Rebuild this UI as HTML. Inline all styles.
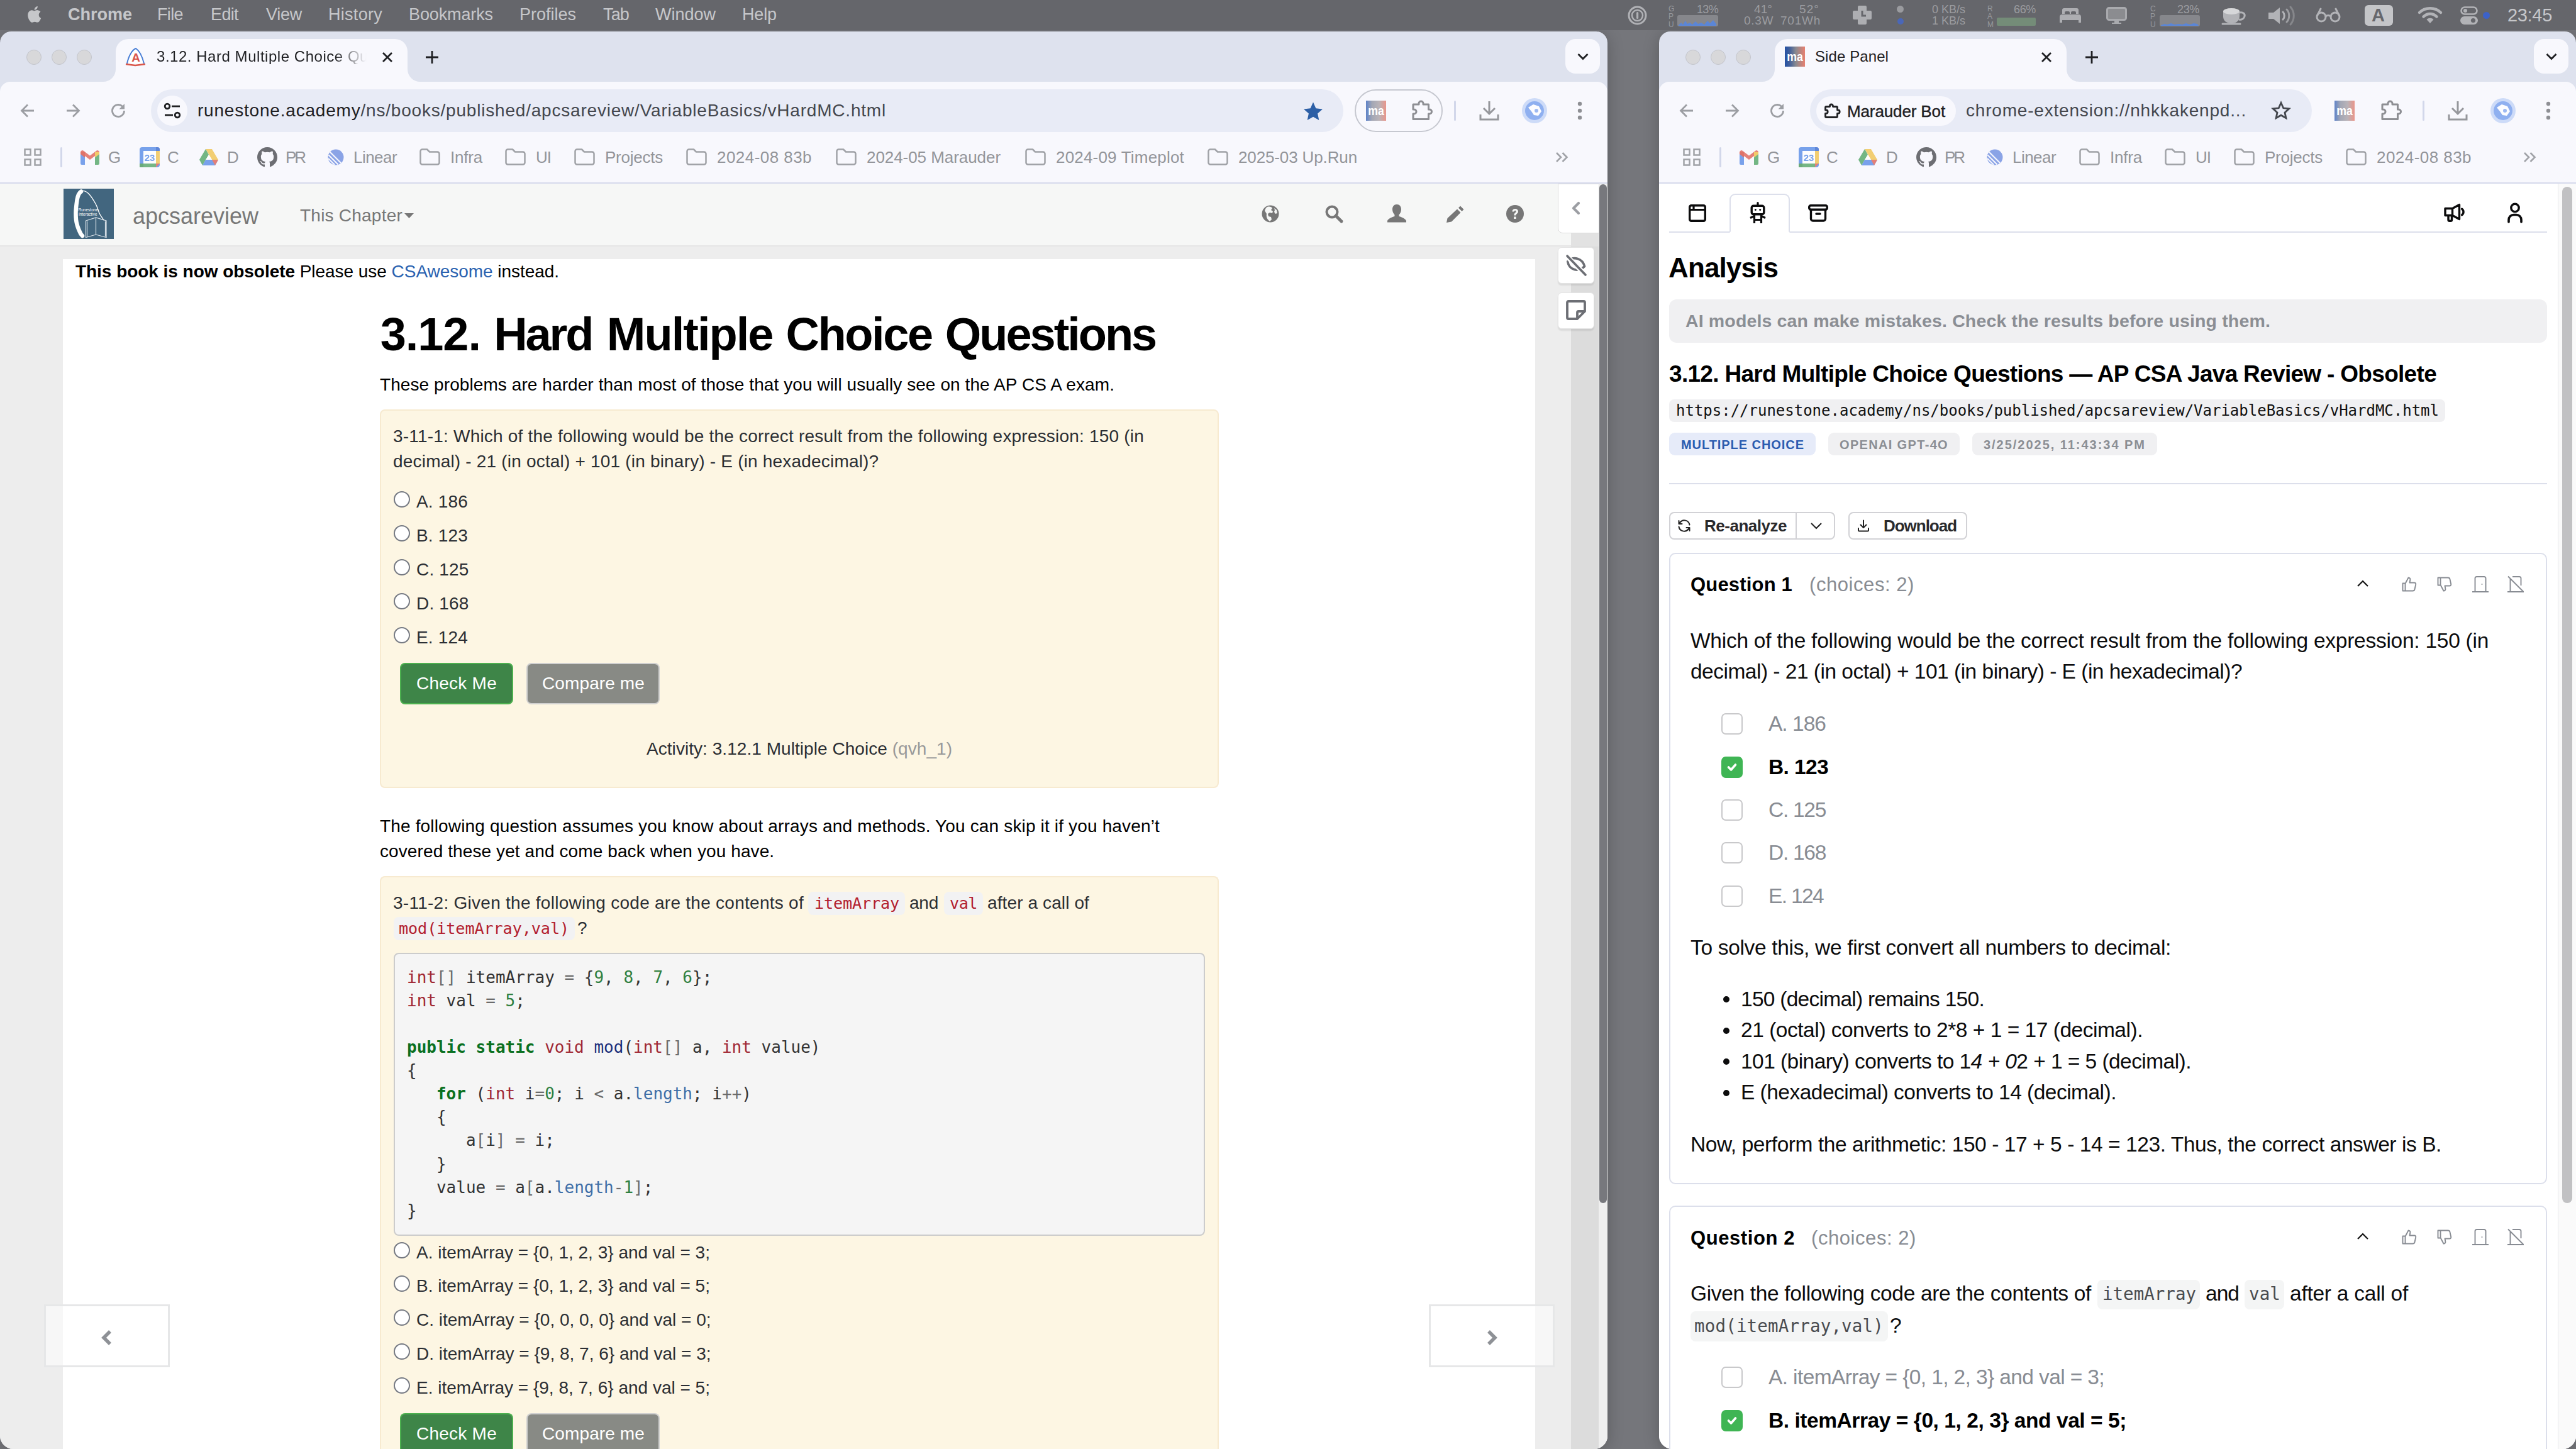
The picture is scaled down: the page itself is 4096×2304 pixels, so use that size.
<!DOCTYPE html>
<html lang="en"><head><meta charset="utf-8"><title>Screenshot</title>
<style>
html,body{margin:0;padding:0;width:4096px;height:2304px;overflow:hidden}
body{width:4096px;height:2304px;position:relative;overflow:hidden;background:#75767b}
.a{position:absolute;box-sizing:border-box}
.t{white-space:pre;margin:0;padding:0;border:0;background:none}
svg{overflow:visible}
</style></head>
<body>
<header aria-label="Chrome window: runestone.academy">
<div class="a" style="left:0px;top:50px;width:2556px;height:2254px;background:#dee2ee;border-radius:18px 18px 21px 21px;box-shadow:0 4px 26px rgba(0,0,0,.22);"></div>
<div class="a" style="left:0px;top:130px;width:2556px;height:161px;background:#f8f8fd;border-radius:16px 16px 0 0;"></div>
<div class="a" style="left:0px;top:290px;width:2556px;height:2px;background:#d6daec;"></div>
<div class="a" style="left:184px;top:62px;width:464px;height:70px;background:#f8f8fd;border-radius:20px 20px 0 0;"></div>
<svg class="a" style="left:164px;top:110px;" width="20" height="20" viewBox="0 0 20 20"><path d="M20 0v20H0A20 20 0 0 0 20 0z" fill="#f8f8fd"/></svg>
<svg class="a" style="left:648px;top:110px;" width="20" height="20" viewBox="0 0 20 20"><path d="M0 0v20h20A20 20 0 0 1 0 0z" fill="#f8f8fd"/></svg>
<div class="a" style="left:42px;top:79px;width:24px;height:24px;background:#d8d8da;border-radius:50%;border:1.500px solid #c3c5cc;"></div>
<div class="a" style="left:82px;top:79px;width:24px;height:24px;background:#d8d8da;border-radius:50%;border:1.500px solid #c3c5cc;"></div>
<div class="a" style="left:122px;top:79px;width:24px;height:24px;background:#d8d8da;border-radius:50%;border:1.500px solid #c3c5cc;"></div>
<svg class="a" style="left:199px;top:75px;" width="34" height="30" viewBox="0 0 34 30"><path d="M3 26C6 12 12 4 17 2c6 4 10 12 13 24" fill="#fff" stroke="#4a7fd6" stroke-width="2"/><path d="M1 27l15 2 16-2" stroke="#d9564a" stroke-width="2.500" fill="none"/><text x="17" y="23" text-anchor="middle" font-family="Liberation Sans, sans-serif" font-size="19" font-weight="700" fill="#d9564a">A</text></svg>
<span class="a t" style="left:249px;top:78.18px;font:400 24px/24px 'Liberation Sans', sans-serif;color:#1f2023;letter-spacing:0.534px;-webkit-mask-image:linear-gradient(90deg,#000 84%,transparent 99%);mask-image:linear-gradient(90deg,#000 84%,transparent 99%);">3.12. Hard Multiple Choice Qu</span>
<svg class="a" style="left:607px;top:82px;" width="18" height="18" viewBox="0 0 18 18"><path d="M2 2l14 14M16 2L2 16" fill="none" stroke="#1f2023" stroke-width="2.800"/></svg>
<svg class="a" style="left:676px;top:80px;" width="22" height="22" viewBox="0 0 22 22"><path d="M11 1v20M1 11h20" fill="none" stroke="#1f2023" stroke-width="2.800"/></svg>
<div class="a" style="left:2489px;top:62px;width:55px;height:55px;background:#f8f8fd;border-radius:16px;"></div>
<svg class="a" style="left:2507px;top:84px;" width="20" height="12" viewBox="0 0 20 12"><path d="M2.500 2l7.500 7.500 7.500-7.500" fill="none" stroke="#1f2023" stroke-width="2.800"/></svg>
<svg class="a" style="left:32px;top:164px;" width="24" height="24" viewBox="0 0 24 24"><path d="M22 12H3M12 2.500L2.500 12L12 21.500" fill="none" stroke="#9c9ea3" stroke-width="2.800"/></svg>
<svg class="a" style="left:104px;top:164px;" width="24" height="24" viewBox="0 0 24 24"><path d="M2 12H21M12 2.500L21.500 12L12 21.500" fill="none" stroke="#9c9ea3" stroke-width="2.800"/></svg>
<svg class="a" style="left:175px;top:163px;" width="26" height="26" viewBox="0 0 26 26"><path d="M22.500 13a9.500 9.500 0 1 1-2.800-6.700" fill="none" stroke="#9c9ea3" stroke-width="2.800"/><path d="M23 2v8.500h-8.500z" fill="#9c9ea3"/></svg>
<div class="a" style="left:240px;top:142px;width:1896px;height:68px;background:#e8ebf6;border-radius:34px;"></div>
<div class="a" style="left:250px;top:152px;width:48px;height:48px;background:#f8f8fd;border-radius:50%;"></div>
<svg class="a" style="left:260px;top:164px;" width="28" height="24" viewBox="0 0 28 24"><circle cx="6" cy="5" r="3.800" fill="none" stroke="#1f2023" stroke-width="2.800"/><path d="M13 5h13" stroke="#1f2023" stroke-width="2.800"/><circle cx="22" cy="19" r="3.800" fill="none" stroke="#1f2023" stroke-width="2.800"/><path d="M2 19h13" stroke="#1f2023" stroke-width="2.800"/></svg>
<span class="a t" style="left:314px;top:162.30px;font:400 28px/28px 'Liberation Sans', sans-serif;color:#44474e;letter-spacing:0.797px;"><span style="color:#1f2023">runestone.academy</span>/ns/books/published/apcsareview/VariableBasics/vHardMC.html</span>
<svg class="a" style="left:2072px;top:161px;" width="32" height="32" viewBox="0 0 32 32"><path d="M16 1.500l4.400 9.700 10.600 1.200-7.900 7.200 2.200 10.400L16 24.700 6.700 30l2.200-10.400L1 12.400l10.600-1.200z" fill="#2c5fa6"/></svg>
<div class="a" style="left:2154px;top:142px;width:140px;height:68px;border-radius:34px;border:2px solid #c6c8d0;"></div>
<svg class="a" style="left:2172px;top:160px;" width="32" height="32" viewBox="0 0 32 32"><defs><linearGradient id="magL" x1="0" x2="1" y1="0" y2="0"><stop offset="0" stop-color="#5f83c8"/><stop offset="0.300" stop-color="#a3a7b5"/><stop offset="0.650" stop-color="#b9b3b8"/><stop offset="1" stop-color="#ea958a"/></linearGradient></defs><rect width="32" height="32" fill="url(#magL)"/><text x="16.0" y="23.04" text-anchor="middle" font-family="Liberation Sans, sans-serif" font-weight="700" font-size="20.48" fill="#fff" textLength="25.6" lengthAdjust="spacingAndGlyphs">ma</text></svg>
<svg class="a" style="left:2243px;top:157px;" width="36" height="36" viewBox="0 0 36 36"><path d="M4 9h9V7.500a3.500 3.500 0 0 1 7 0V9h8.500v8H30a3.500 3.500 0 0 1 0 7h-1.500v8.500H4V24h1.500a3.500 3.500 0 0 0 0-7H4z" fill="none" stroke="#8e8f94" stroke-width="3" stroke-linejoin="round"/></svg>
<div class="a" style="left:2312px;top:160px;width:3px;height:32px;background:#d2d7ea;border-radius:1.5px;"></div>
<svg class="a" style="left:2350px;top:158px;" width="36" height="36" viewBox="0 0 36 36"><path d="M18 3v19M9 14l9 9 9-9" fill="none" stroke="#96979c" stroke-width="3"/><path d="M4 24v8h28v-8" fill="none" stroke="#96979c" stroke-width="3"/></svg>
<svg class="a" style="left:2420px;top:156px;" width="40" height="40" viewBox="0 0 40 40"><circle cx="20" cy="20" r="20" fill="#cddbf8"/><circle cx="20" cy="20" r="15" fill="#8fb0f0"/><path d="M10 15l8-5 9 3 4 8-5 7-7-1-4-6z" fill="#fdfdff"/><circle cx="23" cy="20" r="3" fill="#9db9f2"/></svg>
<svg class="a" style="left:2508px;top:158px;" width="8" height="36" viewBox="0 0 8 36"><circle cx="4" cy="7" r="3.200" fill="#8e8f94"/><circle cx="4" cy="18" r="3.200" fill="#8e8f94"/><circle cx="4" cy="29" r="3.200" fill="#8e8f94"/></svg>
<svg class="a" style="left:38px;top:236px;" width="28" height="28" viewBox="0 0 28 28"><rect x="1.5" y="1.5" width="9" height="9" fill="none" stroke="#a0a2a7" stroke-width="2.500"/><rect x="1.5" y="17.5" width="9" height="9" fill="none" stroke="#a0a2a7" stroke-width="2.500"/><rect x="17.5" y="1.5" width="9" height="9" fill="none" stroke="#a0a2a7" stroke-width="2.500"/><rect x="17.5" y="17.5" width="9" height="9" fill="none" stroke="#a0a2a7" stroke-width="2.500"/></svg>
<div class="a" style="left:96px;top:234px;width:3px;height:32px;background:#d2d7ea;border-radius:1.5px;"></div>
<svg class="a" style="left:128px;top:239px;opacity:.82;" width="30" height="23" viewBox="0 0 30 23"><path d="M0 3v18a2 2 0 0 0 2 2h5V9z" fill="#5e8fe8"/><path d="M30 3v18a2 2 0 0 1-2 2h-5V9z" fill="#56a86a"/><path d="M7 9v14h0V9l8 6 8-6v14h0V9l7-5.500V3a3 3 0 0 0-4.800-2.300L15 8.500 4.800.7A3 3 0 0 0 0 3v.5z" fill="#e2685c"/><path d="M23 2.500L30 3v3l-7 5.500z" fill="#f0c14b"/><path d="M0 3l7-.5v9L0 6z" fill="#d9564a"/></svg>
<span class="a t" style="left:172px;top:237.49px;font:400 26px/26px 'Liberation Sans', sans-serif;color:#93959a;letter-spacing:-2.234px;">G</span>
<svg class="a" style="left:222px;top:234px;opacity:.82;" width="32" height="32" viewBox="0 0 32 32"><rect x="0" y="0" width="32" height="32" rx="4" fill="#5b8fe8"/><rect x="6" y="6" width="20" height="20" fill="#fff"/><path d="M26 0h2a4 4 0 0 1 4 4v2h-6z" fill="#3f6fd0"/><rect x="26" y="6" width="6" height="20" fill="#f1c655"/><rect x="6" y="26" width="20" height="6" fill="#5aa86b"/><path d="M26 26h6l-6 6z" fill="#e0665b"/><rect x="0" y="26" width="6" height="6" fill="#4c9a5e"/><text x="16" y="22" text-anchor="middle" font-family="Liberation Sans, sans-serif" font-size="15" font-weight="700" fill="#5b8fe8">23</text></svg>
<span class="a t" style="left:266px;top:237.49px;font:400 26px/26px 'Liberation Sans', sans-serif;color:#93959a;letter-spacing:-1.781px;">C</span>
<svg class="a" style="left:317px;top:237px;opacity:.82;" width="30" height="26" viewBox="0 0 30 26"><path d="M10 0h10l10 17H20z" fill="#f1c655"/><path d="M10 0L0 17l5 9 10-17z" fill="#56a86a"/><path d="M5 26h20l5-9H10z" fill="#5e8fe8"/><path d="M20 17h10l-5 9z" fill="#e0665b"/><path d="M15 9l5 8H10z" fill="#fff"/></svg>
<span class="a t" style="left:361px;top:237.49px;font:400 26px/26px 'Liberation Sans', sans-serif;color:#93959a;letter-spacing:-2.781px;">D</span>
<svg class="a" style="left:409px;top:234px;" width="32" height="32" viewBox="0 0 32 32"><path transform="scale(2)" fill="#6d6e73" d="M8 0C3.580 0 0 3.580 0 8c0 3.540 2.290 6.530 5.470 7.590.4.070.550-.170.550-.380 0-.190-.010-.820-.010-1.490-2.010.370-2.530-.490-2.690-.940-.090-.230-.480-.940-.820-1.130-.280-.150-.680-.520-.010-.530.630-.010 1.080.580 1.230.820.720 1.210 1.870.870 2.330.660.070-.520.280-.870.510-1.070-1.780-.200-3.640-.890-3.640-3.950 0-.870.310-1.590.820-2.150-.080-.200-.360-1.020.080-2.120 0 0 .670-.210 2.200.820.640-.180 1.320-.270 2-.270s1.360.090 2 .270c1.530-1.040 2.200-.820 2.200-.820.440 1.100.160 1.920.080 2.120.510.560.820 1.270.820 2.150 0 3.070-1.870 3.750-3.650 3.950.290.250.540.730.540 1.480 0 1.070-.010 1.930-.010 2.200 0 .210.150.460.550.380A8.013 8.013 0 0 0 16 8c0-4.420-3.580-8-8-8z"/></svg>
<span class="a t" style="left:454px;top:237.49px;font:400 26px/26px 'Liberation Sans', sans-serif;color:#93959a;letter-spacing:-3.062px;">PR</span>
<svg class="a" style="left:521px;top:237px;" width="26" height="26" viewBox="0 0 26 26"><circle cx="13" cy="13" r="12.500" fill="#8aa3e6"/><path d="M1 15L11 25M1.500 9.500L16.500 24.500M4 5L21 22" stroke="#f8f8fd" stroke-width="2" fill="none"/></svg>
<span class="a t" style="left:562px;top:237.49px;font:400 26px/26px 'Liberation Sans', sans-serif;color:#93959a;letter-spacing:-0.547px;">Linear</span>
<svg class="a" style="left:667px;top:236px;" width="33" height="27" viewBox="0 0 33 27"><path d="M1.500 4.500a3 3 0 0 1 3-3h7.500l4 4h12.500a3 3 0 0 1 3 3v14a3 3 0 0 1-3 3h-24a3 3 0 0 1-3-3z" fill="none" stroke="#a0a2a7" stroke-width="2.500" stroke-linejoin="round"/></svg>
<span class="a t" style="left:716px;top:237.49px;font:400 26px/26px 'Liberation Sans', sans-serif;color:#93959a;letter-spacing:-0.206px;">Infra</span>
<svg class="a" style="left:803px;top:236px;" width="33" height="27" viewBox="0 0 33 27"><path d="M1.500 4.500a3 3 0 0 1 3-3h7.500l4 4h12.500a3 3 0 0 1 3 3v14a3 3 0 0 1-3 3h-24a3 3 0 0 1-3-3z" fill="none" stroke="#a0a2a7" stroke-width="2.500" stroke-linejoin="round"/></svg>
<span class="a t" style="left:852px;top:237.49px;font:400 26px/26px 'Liberation Sans', sans-serif;color:#93959a;letter-spacing:-1.000px;">UI</span>
<svg class="a" style="left:913px;top:236px;" width="33" height="27" viewBox="0 0 33 27"><path d="M1.500 4.500a3 3 0 0 1 3-3h7.500l4 4h12.500a3 3 0 0 1 3 3v14a3 3 0 0 1-3 3h-24a3 3 0 0 1-3-3z" fill="none" stroke="#a0a2a7" stroke-width="2.500" stroke-linejoin="round"/></svg>
<span class="a t" style="left:962px;top:237.49px;font:400 26px/26px 'Liberation Sans', sans-serif;color:#93959a;letter-spacing:-0.240px;">Projects</span>
<svg class="a" style="left:1091px;top:236px;" width="33" height="27" viewBox="0 0 33 27"><path d="M1.500 4.500a3 3 0 0 1 3-3h7.500l4 4h12.500a3 3 0 0 1 3 3v14a3 3 0 0 1-3 3h-24a3 3 0 0 1-3-3z" fill="none" stroke="#a0a2a7" stroke-width="2.500" stroke-linejoin="round"/></svg>
<span class="a t" style="left:1140px;top:237.49px;font:400 26px/26px 'Liberation Sans', sans-serif;color:#93959a;letter-spacing:0.452px;">2024-08 83b</span>
<svg class="a" style="left:1329px;top:236px;" width="33" height="27" viewBox="0 0 33 27"><path d="M1.500 4.500a3 3 0 0 1 3-3h7.500l4 4h12.500a3 3 0 0 1 3 3v14a3 3 0 0 1-3 3h-24a3 3 0 0 1-3-3z" fill="none" stroke="#a0a2a7" stroke-width="2.500" stroke-linejoin="round"/></svg>
<span class="a t" style="left:1378px;top:237.49px;font:400 26px/26px 'Liberation Sans', sans-serif;color:#93959a;letter-spacing:-0.058px;">2024-05 Marauder</span>
<svg class="a" style="left:1630px;top:236px;" width="33" height="27" viewBox="0 0 33 27"><path d="M1.500 4.500a3 3 0 0 1 3-3h7.500l4 4h12.500a3 3 0 0 1 3 3v14a3 3 0 0 1-3 3h-24a3 3 0 0 1-3-3z" fill="none" stroke="#a0a2a7" stroke-width="2.500" stroke-linejoin="round"/></svg>
<span class="a t" style="left:1679px;top:237.49px;font:400 26px/26px 'Liberation Sans', sans-serif;color:#93959a;letter-spacing:0.193px;">2024-09 Timeplot</span>
<svg class="a" style="left:1920px;top:236px;" width="33" height="27" viewBox="0 0 33 27"><path d="M1.500 4.500a3 3 0 0 1 3-3h7.500l4 4h12.500a3 3 0 0 1 3 3v14a3 3 0 0 1-3 3h-24a3 3 0 0 1-3-3z" fill="none" stroke="#a0a2a7" stroke-width="2.500" stroke-linejoin="round"/></svg>
<span class="a t" style="left:1969px;top:237.49px;font:400 26px/26px 'Liberation Sans', sans-serif;color:#93959a;letter-spacing:-0.129px;">2025-03 Up.Run</span>
<svg class="a" style="left:2473px;top:241px;" width="22" height="18" viewBox="0 0 22 18"><path d="M2 2l7 7-7 7M11.500 2l7 7-7 7" fill="none" stroke="#a0a2a7" stroke-width="2.600"/></svg>
</header>
<main aria-label="Runestone page">
<div class="a" style="left:0px;top:292px;width:2556px;height:2012px;background:#ededed;border-radius:0 0 21px 21px;overflow:hidden;"><div class="a" style="left:100px;top:120px;width:2341px;height:1900px;background:#fff"></div><div class="a" style="left:2498px;top:79px;width:44px;height:1940px;background:#dcdcdc"></div><div class="a" style="left:2542px;top:0;width:14px;height:2020px;background:#efefef"></div></div>
<div class="a" style="left:0px;top:292px;width:2498px;height:100px;background:#f6f7f6;border-bottom:2px solid #e6e6e6;"></div>
<div class="a" style="left:2498px;top:371px;width:44px;height:21px;background:#e2e2e2;"></div>
<div class="a" style="left:2543px;top:293px;width:12px;height:1620px;background:#77787d;border-radius:6px;"></div>
<div class="a" style="left:101px;top:300px;width:80px;height:80px;background:#42667f;"></div>
<svg class="a" style="left:101px;top:300px;" width="80" height="80" viewBox="0 0 80 80"><path d="M28 4.500C24 7 22.500 12 21.500 18c-1 7-2 14-2 21s.500 13 2 18c1.500 6 4 11 6 15l2.500 3" fill="none" stroke="#fff" stroke-width="6.500" stroke-linecap="round"/><path d="M29 3.500C33 3 37 5 40 8S47 17 51 24S55 36 58 41S62 47 64 50" fill="none" stroke="#fff" stroke-width="1.400"/><path d="M35.500 51l16-5 16.500 5v26.500l-16.500-4.500-16 4.500zM51.500 46v27M37.500 52v24M66.500 52v24" fill="none" stroke="#dde4ea" stroke-width="1.200"/><text x="23.500" y="36" font-family="Liberation Sans, sans-serif" font-size="7" fill="#fff" textLength="31.500" lengthAdjust="spacingAndGlyphs">Runestone</text><text x="24" y="43" font-family="Liberation Sans, sans-serif" font-size="7" fill="#fff" textLength="29.500" lengthAdjust="spacingAndGlyphs">Interactive</text></svg>
<span class="a t" style="left:211px;top:325.53px;font:400 36px/36px 'Liberation Sans', sans-serif;color:#777;letter-spacing:-0.009px;">apcsareview</span>
<span class="a t" style="left:477px;top:329.30px;font:400 28px/28px 'Liberation Sans', sans-serif;color:#777;letter-spacing:0.225px;">This Chapter</span>
<svg class="a" style="left:643px;top:339px;" width="15" height="8" viewBox="0 0 15 8"><path d="M0 0h15L7.500 8z" fill="#777"/></svg>
<svg class="a" style="left:2006px;top:326px;" width="28" height="28" viewBox="0 0 28 28"><circle cx="14" cy="14" r="13.500" fill="#777"/><path d="M9 3c4-1 7 0 8 2l-2 3 3 2-1 3-4-1-3 2 1 4 4 1 1 4-3 3c-4-3-6-7-5-12L5 9c1-3 2-5 4-6zM20 5l4 3 1 5-3 1-2-3 1-3z" fill="#f6f7f6"/></svg>
<svg class="a" style="left:2107px;top:326px;" width="28" height="28" viewBox="0 0 28 28"><circle cx="11" cy="11" r="8.500" fill="none" stroke="#777" stroke-width="4"/><path d="M17.500 17.500L26 26" stroke="#777" stroke-width="5" stroke-linecap="round"/></svg>
<svg class="a" style="left:2206px;top:325px;" width="30" height="29" viewBox="0 0 30 29"><path d="M15 0c4.500 0 7 3.500 7 8 0 3.500-1.500 6.500-3.500 8.500v2.500c5 1.500 10 3.500 11.500 7v2.500H0V26c1.500-3.500 6.500-5.500 11.500-7v-2.500C9.500 14.500 8 11.500 8 8c0-4.500 2.500-8 7-8z" fill="#777"/></svg>
<svg class="a" style="left:2300px;top:326px;" width="30" height="28" viewBox="0 0 30 28"><path d="M22 1.500l5.500 5.500-3 3L19 4.500zM17 6.500l5.500 5.500L8 26.500 0 28l1.500-7z" fill="#777"/></svg>
<svg class="a" style="left:2395px;top:326px;" width="28" height="28" viewBox="0 0 28 28"><circle cx="14" cy="14" r="14" fill="#777"/><path d="M9.500 10.500c0-3 2-4.500 4.700-4.500 2.800 0 4.800 1.700 4.800 4.200 0 3.300-3.500 3.400-3.500 6.300h-3.200c0-4 3.300-4.300 3.300-6.300 0-.9-.6-1.500-1.500-1.500-1 0-1.600.7-1.600 1.800zM12.200 18.500h3.400v3.500h-3.400z" fill="#f6f7f6"/></svg>
<div class="a" style="left:2477px;top:292px;width:66px;height:79px;background:#fff;border-radius:0 0 0 8px;border:1.500px solid #dcdcdc;"></div>
<svg class="a" style="left:2499px;top:321px;" width="14" height="20" viewBox="0 0 14 20"><path d="M11 2L3 10l8 8" fill="none" stroke="#9c9ea3" stroke-width="4.200" stroke-linecap="round" stroke-linejoin="round"/></svg>
<div class="a" style="left:2477px;top:393px;width:58px;height:58px;background:#fff;border-radius:6px;border:1.500px solid #e4e4e4;box-shadow:0 3px 2px rgba(0,0,0,.08);"></div>
<div class="a" style="left:2477px;top:465px;width:58px;height:58px;background:#fff;border-radius:6px;border:1.500px solid #e4e4e4;box-shadow:0 3px 2px rgba(0,0,0,.08);"></div>
<svg class="a" style="left:2489px;top:405px;" width="34" height="34" viewBox="0 0 34 34"><path d="M3 15c3-6 8-9 14-9 5 0 10 2 14 8-3 6-8 10-14 10-6 0-11-3-14-9z" fill="none" stroke="#6c6e74" stroke-width="3.600" stroke-linejoin="round" transform="rotate(18 17 15)"/><path d="M2 2l30 30" stroke="#fff" stroke-width="8"/><path d="M3 2l29 30" stroke="#6c6e74" stroke-width="3.600" stroke-linecap="round"/></svg>
<svg class="a" style="left:2490px;top:477px;" width="32" height="32" viewBox="0 0 32 32"><path d="M4 2h24a2 2 0 0 1 2 2v14L18 30H4a2 2 0 0 1-2-2V4a2 2 0 0 1 2-2z" fill="none" stroke="#6c6e74" stroke-width="3.800" stroke-linejoin="round"/><path d="M29 18H20a2 2 0 0 0-2 2v9" fill="none" stroke="#6c6e74" stroke-width="3.800"/></svg>
<p class="a t" style="left:120px;top:418.30px;font:400 28px/28px 'Liberation Sans', sans-serif;color:#000;letter-spacing:-0.042px;"><span style="font-weight:700">This book is now obsolete</span> Please use <span style="color:#2a62b0">CSAwesome</span> instead.</p>
<h1 style="margin:0">
<span class="a t" style="left:604.7px;top:495.36px;font:700 74px/74px 'Liberation Sans', sans-serif;color:#000;letter-spacing:-1.081px;">3.12. </span>
<span class="a t" style="left:785.2px;top:495.36px;font:700 74px/74px 'Liberation Sans', sans-serif;color:#000;letter-spacing:-3.131px;">Hard </span>
<span class="a t" style="left:964.8px;top:495.36px;font:700 74px/74px 'Liberation Sans', sans-serif;color:#000;letter-spacing:-1.981px;">Multiple </span>
<span class="a t" style="left:1249.4px;top:495.36px;font:700 74px/74px 'Liberation Sans', sans-serif;color:#000;letter-spacing:-2.392px;">Choice </span>
<span class="a t" style="left:1502.8px;top:495.36px;font:700 74px/74px 'Liberation Sans', sans-serif;color:#000;letter-spacing:-3.047px;">Questions</span>
</h1>
<p class="a t" style="left:604px;top:597.80px;font:400 28px/28px 'Liberation Sans', sans-serif;color:#000;letter-spacing:0.082px;">These problems are harder than most of those that you will usually see on the AP CS A exam.</p>
<div class="a" style="left:604px;top:651px;width:1334px;height:602px;background:#fdf6e3;border-radius:8px;border:2px solid #f7ead0;"></div>
<span class="a t" style="left:625px;top:680.10px;font:400 28px/28px 'Liberation Sans', sans-serif;color:#2b2e33;letter-spacing:0.201px;">3-11-1: Which of the following would be the correct result from the following expression: 150 (in</span>
<span class="a t" style="left:625px;top:720.00px;font:400 28px/28px 'Liberation Sans', sans-serif;color:#2b2e33;letter-spacing:.19px;">decimal) - 21 (in octal) + 101 (in binary) - E (in hexadecimal)?</span>
<div class="a" style="left:626px;top:781px;width:26px;height:26px;background:#fff;border-radius:50%;border:2px solid #767a83;"></div>
<label class="a t" style="left:662px;top:784.30px;font:400 28px/28px 'Liberation Sans', sans-serif;color:#2b2e33;letter-spacing:.19px;">A. 186</label>
<div class="a" style="left:626px;top:835px;width:26px;height:26px;background:#fff;border-radius:50%;border:2px solid #767a83;"></div>
<label class="a t" style="left:662px;top:838.30px;font:400 28px/28px 'Liberation Sans', sans-serif;color:#2b2e33;letter-spacing:.19px;">B. 123</label>
<div class="a" style="left:626px;top:889px;width:26px;height:26px;background:#fff;border-radius:50%;border:2px solid #767a83;"></div>
<label class="a t" style="left:662px;top:892.30px;font:400 28px/28px 'Liberation Sans', sans-serif;color:#2b2e33;letter-spacing:.19px;">C. 125</label>
<div class="a" style="left:626px;top:943px;width:26px;height:26px;background:#fff;border-radius:50%;border:2px solid #767a83;"></div>
<label class="a t" style="left:662px;top:946.30px;font:400 28px/28px 'Liberation Sans', sans-serif;color:#2b2e33;letter-spacing:.19px;">D. 168</label>
<div class="a" style="left:626px;top:997px;width:26px;height:26px;background:#fff;border-radius:50%;border:2px solid #767a83;"></div>
<label class="a t" style="left:662px;top:1000.30px;font:400 28px/28px 'Liberation Sans', sans-serif;color:#2b2e33;letter-spacing:.19px;">E. 124</label>
<div class="a" style="left:636px;top:1054px;width:180px;height:66px;background:#3e8548;border-radius:8px;border:2px solid #4cb04f;"></div>
<span class="a t" style="left:662px;top:1073.30px;font:400 28px/28px 'Liberation Sans', sans-serif;color:#fff;letter-spacing:0.244px;">Check Me</span>
<div class="a" style="left:837px;top:1054px;width:212px;height:66px;background:#888a85;border-radius:8px;border:2px solid #d0d0d0;"></div>
<span class="a t" style="left:862px;top:1073.30px;font:400 28px/28px 'Liberation Sans', sans-serif;color:#fff;letter-spacing:0.116px;">Compare me</span>
<span class="a t" style="left:1028px;top:1177.30px;font:400 28px/28px 'Liberation Sans', sans-serif;color:#2b2e33;letter-spacing:0.050px;">Activity: 3.12.1 Multiple Choice <span style="color:#999">(qvh_1)</span></span>
<p class="a t" style="left:604px;top:1300.30px;font:400 28px/28px 'Liberation Sans', sans-serif;color:#000;letter-spacing:0.157px;">The following question assumes you know about arrays and methods. You can skip it if you haven’t</p>
<span class="a t" style="left:604px;top:1340.30px;font:400 28px/28px 'Liberation Sans', sans-serif;color:#000;letter-spacing:.1px;">covered these yet and come back when you have.</span>
<div class="a" style="left:604px;top:1393px;width:1334px;height:911px;background:#fdf6e3;border-radius:8px 8px 0 0;border:2px solid #f7ead0;border-bottom:none;"></div>
<div class="a" style="left:1285px;top:1418px;width:154px;height:37px;background:#f2f2f3;border-radius:8px;"></div>
<div class="a" style="left:1501px;top:1418px;width:62px;height:37px;background:#f2f2f3;border-radius:8px;"></div>
<div class="a" style="left:626px;top:1458px;width:288px;height:37px;background:#f2f2f3;border-radius:8px;"></div>
<span class="a t" style="left:625px;top:1422.30px;font:400 28px/28px 'Liberation Sans', sans-serif;color:#2b2e33;letter-spacing:0.265px;">3-11-2: Given the following code are the contents of</span>
<code class="a t" style="left:1295px;top:1423.68px;font:400 25.2px/25.2px 'DejaVu Sans Mono', monospace;color:#b3202f;letter-spacing:-0.165px;">itemArray</code>
<span class="a t" style="left:1446px;top:1422.30px;font:400 28px/28px 'Liberation Sans', sans-serif;color:#2b2e33;letter-spacing:-0.240px;">and</span>
<code class="a t" style="left:1510px;top:1423.68px;font:400 25.2px/25.2px 'DejaVu Sans Mono', monospace;color:#b3202f;letter-spacing:-0.500px;">val</code>
<span class="a t" style="left:1570px;top:1422.30px;font:400 28px/28px 'Liberation Sans', sans-serif;color:#2b2e33;letter-spacing:0.113px;">after a call of</span>
<code class="a t" style="left:634px;top:1463.68px;font:400 25.2px/25.2px 'DejaVu Sans Mono', monospace;color:#b3202f;letter-spacing:-0.109px;">mod(itemArray,val)</code>
<span class="a t" style="left:918px;top:1462.30px;font:400 28px/28px 'Liberation Sans', sans-serif;color:#2b2e33;">?</span>
<div class="a" style="left:626px;top:1515px;width:1290px;height:450px;background:#f5f5f5;border-radius:8px;border:2px solid #cccccc;"></div>
<code class="a t" style="left:647px;top:1540.50px;font:400 26px/26px 'DejaVu Sans Mono', monospace;color:#333;"><span style="color:#a02834">int</span><span style="color:#6b6b6b">[]</span> itemArray <span style="color:#6b6b6b">=</span> {<span style="color:#2f8040">9</span>, <span style="color:#2f8040">8</span>, <span style="color:#2f8040">7</span>, <span style="color:#2f8040">6</span>};</code>
<code class="a t" style="left:647px;top:1577.64px;font:400 26px/26px 'DejaVu Sans Mono', monospace;color:#333;"><span style="color:#a02834">int</span> val <span style="color:#6b6b6b">=</span> <span style="color:#2f8040">5</span>;</code>
<code class="a t" style="left:647px;top:1651.92px;font:400 26px/26px 'DejaVu Sans Mono', monospace;color:#333;"><span style="color:#0a7020;font-weight:700">public</span> <span style="color:#0a7020;font-weight:700">static</span> <span style="color:#a02834">void</span> <span style="color:#1a2f7a">mod</span>(<span style="color:#a02834">int</span><span style="color:#6b6b6b">[]</span> a, <span style="color:#a02834">int</span> value)</code>
<code class="a t" style="left:647px;top:1689.06px;font:400 26px/26px 'DejaVu Sans Mono', monospace;color:#333;">{</code>
<code class="a t" style="left:647px;top:1726.20px;font:400 26px/26px 'DejaVu Sans Mono', monospace;color:#333;">   <span style="color:#0a7020;font-weight:700">for</span> (<span style="color:#a02834">int</span> i<span style="color:#6b6b6b">=</span><span style="color:#2f8040">0</span>; i <span style="color:#6b6b6b">&lt;</span> a.<span style="color:#3f6fa8">length</span>; i<span style="color:#6b6b6b">++</span>)</code>
<code class="a t" style="left:647px;top:1763.34px;font:400 26px/26px 'DejaVu Sans Mono', monospace;color:#333;">   {</code>
<code class="a t" style="left:647px;top:1800.48px;font:400 26px/26px 'DejaVu Sans Mono', monospace;color:#333;">      a<span style="color:#6b6b6b">[</span>i<span style="color:#6b6b6b">]</span> <span style="color:#6b6b6b">=</span> i;</code>
<code class="a t" style="left:647px;top:1837.62px;font:400 26px/26px 'DejaVu Sans Mono', monospace;color:#333;">   }</code>
<code class="a t" style="left:647px;top:1874.76px;font:400 26px/26px 'DejaVu Sans Mono', monospace;color:#333;">   value <span style="color:#6b6b6b">=</span> a<span style="color:#6b6b6b">[</span>a.<span style="color:#3f6fa8">length</span><span style="color:#6b6b6b">-</span><span style="color:#2f8040">1</span><span style="color:#6b6b6b">]</span>;</code>
<code class="a t" style="left:647px;top:1911.90px;font:400 26px/26px 'DejaVu Sans Mono', monospace;color:#333;">}</code>
<div class="a" style="left:626px;top:1975px;width:26px;height:26px;background:#fff;border-radius:50%;border:2px solid #767a83;"></div>
<label class="a t" style="left:662px;top:1978.30px;font:400 28px/28px 'Liberation Sans', sans-serif;color:#2b2e33;">A. itemArray = {0, 1, 2, 3} and val = 3;</label>
<div class="a" style="left:626px;top:2028px;width:26px;height:26px;background:#fff;border-radius:50%;border:2px solid #767a83;"></div>
<label class="a t" style="left:662px;top:2031.30px;font:400 28px/28px 'Liberation Sans', sans-serif;color:#2b2e33;">B. itemArray = {0, 1, 2, 3} and val = 5;</label>
<div class="a" style="left:626px;top:2082px;width:26px;height:26px;background:#fff;border-radius:50%;border:2px solid #767a83;"></div>
<label class="a t" style="left:662px;top:2085.30px;font:400 28px/28px 'Liberation Sans', sans-serif;color:#2b2e33;">C. itemArray = {0, 0, 0, 0} and val = 0;</label>
<div class="a" style="left:626px;top:2136px;width:26px;height:26px;background:#fff;border-radius:50%;border:2px solid #767a83;"></div>
<label class="a t" style="left:662px;top:2139.30px;font:400 28px/28px 'Liberation Sans', sans-serif;color:#2b2e33;">D. itemArray = {9, 8, 7, 6} and val = 3;</label>
<div class="a" style="left:626px;top:2190px;width:26px;height:26px;background:#fff;border-radius:50%;border:2px solid #767a83;"></div>
<label class="a t" style="left:662px;top:2193.30px;font:400 28px/28px 'Liberation Sans', sans-serif;color:#2b2e33;">E. itemArray = {9, 8, 7, 6} and val = 5;</label>
<div class="a" style="left:636px;top:2247px;width:180px;height:57px;background:#3e8548;border-radius:8px 8px 0 0;border:2px solid #4cb04f;border-bottom:none;"></div>
<span class="a t" style="left:662px;top:2266.30px;font:400 28px/28px 'Liberation Sans', sans-serif;color:#fff;letter-spacing:0.244px;">Check Me</span>
<div class="a" style="left:837px;top:2247px;width:212px;height:57px;background:#888a85;border-radius:8px 8px 0 0;border:2px solid #d0d0d0;border-bottom:none;"></div>
<span class="a t" style="left:862px;top:2266.30px;font:400 28px/28px 'Liberation Sans', sans-serif;color:#fff;letter-spacing:0.116px;">Compare me</span>
<div class="a" style="left:70px;top:2074px;width:200px;height:100px;background:rgba(255,255,255,.55);border:3px solid #e6e7e8;"></div>
<svg class="a" style="left:162px;top:2115px;" width="16" height="24" viewBox="0 0 16 24"><path d="M13 2L3 12l10 10" fill="none" stroke="#8e9196" stroke-width="5.500"/></svg>
<div class="a" style="left:2272px;top:2074px;width:200px;height:100px;background:rgba(255,255,255,.55);border:3px solid #e6e7e8;"></div>
<svg class="a" style="left:2364px;top:2115px;" width="16" height="24" viewBox="0 0 16 24"><path d="M3 2l10 10L3 22" fill="none" stroke="#8e9196" stroke-width="5.500"/></svg>
</main>
<header aria-label="Chrome window: Side Panel">
<div class="a" style="left:2638px;top:50px;width:1458px;height:2254px;background:#dee2ee;border-radius:18px 18px 21px 21px;box-shadow:0 4px 26px rgba(0,0,0,.22);"></div>
<div class="a" style="left:2638px;top:130px;width:1458px;height:161px;background:#f8f8fd;border-radius:16px 16px 0 0;"></div>
<div class="a" style="left:2638px;top:290px;width:1458px;height:2px;background:#d6daec;"></div>
<div class="a" style="left:2822px;top:62px;width:464px;height:70px;background:#f8f8fd;border-radius:20px 20px 0 0;"></div>
<svg class="a" style="left:2802px;top:110px;" width="20" height="20" viewBox="0 0 20 20"><path d="M20 0v20H0A20 20 0 0 0 20 0z" fill="#f8f8fd"/></svg>
<svg class="a" style="left:3286px;top:110px;" width="20" height="20" viewBox="0 0 20 20"><path d="M0 0v20h20A20 20 0 0 1 0 0z" fill="#f8f8fd"/></svg>
<div class="a" style="left:2680px;top:79px;width:24px;height:24px;background:#d8d8da;border-radius:50%;border:1.500px solid #c3c5cc;"></div>
<div class="a" style="left:2720px;top:79px;width:24px;height:24px;background:#d8d8da;border-radius:50%;border:1.500px solid #c3c5cc;"></div>
<div class="a" style="left:2760px;top:79px;width:24px;height:24px;background:#d8d8da;border-radius:50%;border:1.500px solid #c3c5cc;"></div>
<svg class="a" style="left:2838px;top:74px;" width="32" height="32" viewBox="0 0 32 32"><defs><linearGradient id="magT" x1="0" x2="1" y1="0" y2="0"><stop offset="0" stop-color="#2551a4"/><stop offset="0.250" stop-color="#44619a"/><stop offset="0.550" stop-color="#8a8a90"/><stop offset="1" stop-color="#e88070"/></linearGradient></defs><rect width="32" height="32" fill="url(#magT)"/><text x="16.0" y="23.04" text-anchor="middle" font-family="Liberation Sans, sans-serif" font-weight="700" font-size="20.48" fill="#fff" textLength="25.6" lengthAdjust="spacingAndGlyphs">ma</text></svg>
<span class="a t" style="left:2886px;top:78.18px;font:400 24px/24px 'Liberation Sans', sans-serif;color:#1f2023;letter-spacing:0.091px;">Side Panel</span>
<svg class="a" style="left:3245px;top:82px;" width="18" height="18" viewBox="0 0 18 18"><path d="M2 2l14 14M16 2L2 16" fill="none" stroke="#1f2023" stroke-width="2.800"/></svg>
<svg class="a" style="left:3315px;top:80px;" width="22" height="22" viewBox="0 0 22 22"><path d="M11 1v20M1 11h20" fill="none" stroke="#1f2023" stroke-width="2.800"/></svg>
<div class="a" style="left:4029px;top:62px;width:55px;height:55px;background:#f8f8fd;border-radius:16px;"></div>
<svg class="a" style="left:4047px;top:84px;" width="20" height="12" viewBox="0 0 20 12"><path d="M2.500 2l7.500 7.500 7.500-7.500" fill="none" stroke="#1f2023" stroke-width="2.800"/></svg>
<svg class="a" style="left:2670px;top:164px;" width="24" height="24" viewBox="0 0 24 24"><path d="M22 12H3M12 2.500L2.500 12L12 21.500" fill="none" stroke="#9c9ea3" stroke-width="2.800"/></svg>
<svg class="a" style="left:2742px;top:164px;" width="24" height="24" viewBox="0 0 24 24"><path d="M2 12H21M12 2.500L21.500 12L12 21.500" fill="none" stroke="#9c9ea3" stroke-width="2.800"/></svg>
<svg class="a" style="left:2813px;top:163px;" width="26" height="26" viewBox="0 0 26 26"><path d="M22.500 13a9.500 9.500 0 1 1-2.800-6.700" fill="none" stroke="#9c9ea3" stroke-width="2.800"/><path d="M23 2v8.500h-8.500z" fill="#9c9ea3"/></svg>
<div class="a" style="left:2878px;top:142px;width:798px;height:68px;background:#e8ebf6;border-radius:34px;"></div>
<div class="a" style="left:2888px;top:153px;width:222px;height:47px;background:#f8f8fd;border-radius:23.5px;"></div>
<svg class="a" style="left:2899px;top:162px;" width="28" height="28" viewBox="0 0 28 28"><path d="M5 7.500h5.500v-1a2.500 2.500 0 0 1 5 0v1H21A1.500 1.500 0 0 1 22.500 9v4h1a2.700 2.700 0 0 1 0 5.400h-1V23a1.500 1.500 0 0 1-1.500 1.500H5A1.500 1.500 0 0 1 3.500 23v-4.600h1a2.700 2.700 0 0 0 0-5.400h-1V9A1.500 1.500 0 0 1 5 7.500z" fill="none" stroke="#1f2023" stroke-width="2.800" stroke-linejoin="round"/></svg>
<span class="a t" style="left:2937px;top:163.99px;font:400 26px/26px 'Liberation Sans', sans-serif;color:#1f2023;letter-spacing:-0.128px;-webkit-text-stroke:.4px #1f2023;">Marauder Bot</span>
<span class="a t" style="left:3126px;top:162.30px;font:400 28px/28px 'Liberation Sans', sans-serif;color:#44474e;letter-spacing:0.805px;">chrome-extension://nhkkakenpd...</span>
<svg class="a" style="left:3611px;top:160px;" width="32" height="32" viewBox="0 0 32 32"><path d="M16 3.500l3.700 8.300 9 1-6.700 6.100 1.900 8.900L16 23.200 8.100 27.800l1.900-8.900-6.700-6.100 9-1z" fill="none" stroke="#44474e" stroke-width="2.800" stroke-linejoin="miter"/></svg>
<svg class="a" style="left:3712px;top:160px;" width="32" height="32" viewBox="0 0 32 32"><defs><linearGradient id="magR" x1="0" x2="1" y1="0" y2="0"><stop offset="0" stop-color="#5f83c8"/><stop offset="0.300" stop-color="#a3a7b5"/><stop offset="0.650" stop-color="#b9b3b8"/><stop offset="1" stop-color="#ea958a"/></linearGradient></defs><rect width="32" height="32" fill="url(#magR)"/><text x="16.0" y="23.04" text-anchor="middle" font-family="Liberation Sans, sans-serif" font-weight="700" font-size="20.48" fill="#fff" textLength="25.6" lengthAdjust="spacingAndGlyphs">ma</text></svg>
<svg class="a" style="left:3784px;top:157px;" width="36" height="36" viewBox="0 0 36 36"><path d="M4 9h9V7.500a3.500 3.500 0 0 1 7 0V9h8.500v8H30a3.500 3.500 0 0 1 0 7h-1.500v8.500H4V24h1.500a3.500 3.500 0 0 0 0-7H4z" fill="none" stroke="#8e8f94" stroke-width="3" stroke-linejoin="round"/></svg>
<div class="a" style="left:3852px;top:160px;width:3px;height:32px;background:#d2d7ea;border-radius:1.5px;"></div>
<svg class="a" style="left:3890px;top:158px;" width="36" height="36" viewBox="0 0 36 36"><path d="M18 3v19M9 14l9 9 9-9" fill="none" stroke="#96979c" stroke-width="3"/><path d="M4 24v8h28v-8" fill="none" stroke="#96979c" stroke-width="3"/></svg>
<svg class="a" style="left:3960px;top:156px;" width="40" height="40" viewBox="0 0 40 40"><circle cx="20" cy="20" r="20" fill="#cddbf8"/><circle cx="20" cy="20" r="15" fill="#8fb0f0"/><path d="M10 15l8-5 9 3 4 8-5 7-7-1-4-6z" fill="#fdfdff"/><circle cx="23" cy="20" r="3" fill="#9db9f2"/></svg>
<svg class="a" style="left:4048px;top:158px;" width="8" height="36" viewBox="0 0 8 36"><circle cx="4" cy="7" r="3.200" fill="#8e8f94"/><circle cx="4" cy="18" r="3.200" fill="#8e8f94"/><circle cx="4" cy="29" r="3.200" fill="#8e8f94"/></svg>
<svg class="a" style="left:2676px;top:236px;" width="28" height="28" viewBox="0 0 28 28"><rect x="1.5" y="1.5" width="9" height="9" fill="none" stroke="#a0a2a7" stroke-width="2.500"/><rect x="1.5" y="17.5" width="9" height="9" fill="none" stroke="#a0a2a7" stroke-width="2.500"/><rect x="17.5" y="1.5" width="9" height="9" fill="none" stroke="#a0a2a7" stroke-width="2.500"/><rect x="17.5" y="17.5" width="9" height="9" fill="none" stroke="#a0a2a7" stroke-width="2.500"/></svg>
<div class="a" style="left:2734px;top:234px;width:3px;height:32px;background:#d2d7ea;border-radius:1.5px;"></div>
<svg class="a" style="left:2766px;top:239px;opacity:.82;" width="30" height="23" viewBox="0 0 30 23"><path d="M0 3v18a2 2 0 0 0 2 2h5V9z" fill="#5e8fe8"/><path d="M30 3v18a2 2 0 0 1-2 2h-5V9z" fill="#56a86a"/><path d="M7 9v14h0V9l8 6 8-6v14h0V9l7-5.500V3a3 3 0 0 0-4.800-2.300L15 8.500 4.800.7A3 3 0 0 0 0 3v.5z" fill="#e2685c"/><path d="M23 2.500L30 3v3l-7 5.500z" fill="#f0c14b"/><path d="M0 3l7-.5v9L0 6z" fill="#d9564a"/></svg>
<span class="a t" style="left:2810px;top:237.49px;font:400 26px/26px 'Liberation Sans', sans-serif;color:#93959a;letter-spacing:-2.234px;">G</span>
<svg class="a" style="left:2860px;top:234px;opacity:.82;" width="32" height="32" viewBox="0 0 32 32"><rect x="0" y="0" width="32" height="32" rx="4" fill="#5b8fe8"/><rect x="6" y="6" width="20" height="20" fill="#fff"/><path d="M26 0h2a4 4 0 0 1 4 4v2h-6z" fill="#3f6fd0"/><rect x="26" y="6" width="6" height="20" fill="#f1c655"/><rect x="6" y="26" width="20" height="6" fill="#5aa86b"/><path d="M26 26h6l-6 6z" fill="#e0665b"/><rect x="0" y="26" width="6" height="6" fill="#4c9a5e"/><text x="16" y="22" text-anchor="middle" font-family="Liberation Sans, sans-serif" font-size="15" font-weight="700" fill="#5b8fe8">23</text></svg>
<span class="a t" style="left:2904px;top:237.49px;font:400 26px/26px 'Liberation Sans', sans-serif;color:#93959a;letter-spacing:-1.781px;">C</span>
<svg class="a" style="left:2955px;top:237px;opacity:.82;" width="30" height="26" viewBox="0 0 30 26"><path d="M10 0h10l10 17H20z" fill="#f1c655"/><path d="M10 0L0 17l5 9 10-17z" fill="#56a86a"/><path d="M5 26h20l5-9H10z" fill="#5e8fe8"/><path d="M20 17h10l-5 9z" fill="#e0665b"/><path d="M15 9l5 8H10z" fill="#fff"/></svg>
<span class="a t" style="left:2999px;top:237.49px;font:400 26px/26px 'Liberation Sans', sans-serif;color:#93959a;letter-spacing:-2.781px;">D</span>
<svg class="a" style="left:3047px;top:234px;" width="32" height="32" viewBox="0 0 32 32"><path transform="scale(2)" fill="#6d6e73" d="M8 0C3.580 0 0 3.580 0 8c0 3.540 2.290 6.530 5.470 7.590.4.070.550-.170.550-.380 0-.190-.010-.820-.010-1.490-2.010.370-2.530-.490-2.690-.940-.090-.230-.480-.940-.820-1.130-.280-.150-.680-.520-.010-.530.630-.010 1.080.580 1.230.820.720 1.210 1.870.870 2.330.660.070-.520.280-.870.510-1.070-1.780-.200-3.640-.890-3.640-3.950 0-.870.310-1.590.820-2.150-.080-.200-.360-1.020.080-2.120 0 0 .670-.210 2.200.820.640-.180 1.320-.270 2-.270s1.360.090 2 .270c1.530-1.040 2.200-.820 2.200-.820.440 1.100.160 1.920.080 2.120.510.560.820 1.270.820 2.150 0 3.070-1.870 3.750-3.650 3.950.290.250.540.730.540 1.480 0 1.070-.010 1.930-.010 2.200 0 .210.150.460.550.380A8.013 8.013 0 0 0 16 8c0-4.420-3.580-8-8-8z"/></svg>
<span class="a t" style="left:3092px;top:237.49px;font:400 26px/26px 'Liberation Sans', sans-serif;color:#93959a;letter-spacing:-3.062px;">PR</span>
<svg class="a" style="left:3159px;top:237px;" width="26" height="26" viewBox="0 0 26 26"><circle cx="13" cy="13" r="12.500" fill="#8aa3e6"/><path d="M1 15L11 25M1.500 9.500L16.500 24.500M4 5L21 22" stroke="#f8f8fd" stroke-width="2" fill="none"/></svg>
<span class="a t" style="left:3200px;top:237.49px;font:400 26px/26px 'Liberation Sans', sans-serif;color:#93959a;letter-spacing:-0.547px;">Linear</span>
<svg class="a" style="left:3306px;top:236px;" width="33" height="27" viewBox="0 0 33 27"><path d="M1.500 4.500a3 3 0 0 1 3-3h7.500l4 4h12.500a3 3 0 0 1 3 3v14a3 3 0 0 1-3 3h-24a3 3 0 0 1-3-3z" fill="none" stroke="#a0a2a7" stroke-width="2.500" stroke-linejoin="round"/></svg>
<span class="a t" style="left:3355px;top:237.49px;font:400 26px/26px 'Liberation Sans', sans-serif;color:#93959a;letter-spacing:-0.206px;">Infra</span>
<svg class="a" style="left:3442px;top:236px;" width="33" height="27" viewBox="0 0 33 27"><path d="M1.500 4.500a3 3 0 0 1 3-3h7.500l4 4h12.500a3 3 0 0 1 3 3v14a3 3 0 0 1-3 3h-24a3 3 0 0 1-3-3z" fill="none" stroke="#a0a2a7" stroke-width="2.500" stroke-linejoin="round"/></svg>
<span class="a t" style="left:3491px;top:237.49px;font:400 26px/26px 'Liberation Sans', sans-serif;color:#93959a;letter-spacing:-1.000px;">UI</span>
<svg class="a" style="left:3552px;top:236px;" width="33" height="27" viewBox="0 0 33 27"><path d="M1.500 4.500a3 3 0 0 1 3-3h7.500l4 4h12.500a3 3 0 0 1 3 3v14a3 3 0 0 1-3 3h-24a3 3 0 0 1-3-3z" fill="none" stroke="#a0a2a7" stroke-width="2.500" stroke-linejoin="round"/></svg>
<span class="a t" style="left:3601px;top:237.49px;font:400 26px/26px 'Liberation Sans', sans-serif;color:#93959a;letter-spacing:-0.240px;">Projects</span>
<svg class="a" style="left:3730px;top:236px;" width="33" height="27" viewBox="0 0 33 27"><path d="M1.500 4.500a3 3 0 0 1 3-3h7.500l4 4h12.500a3 3 0 0 1 3 3v14a3 3 0 0 1-3 3h-24a3 3 0 0 1-3-3z" fill="none" stroke="#a0a2a7" stroke-width="2.500" stroke-linejoin="round"/></svg>
<span class="a t" style="left:3779px;top:237.49px;font:400 26px/26px 'Liberation Sans', sans-serif;color:#93959a;letter-spacing:0.452px;">2024-08 83b</span>
<svg class="a" style="left:4012px;top:241px;" width="22" height="18" viewBox="0 0 22 18"><path d="M2 2l7 7-7 7M11.500 2l7 7-7 7" fill="none" stroke="#a0a2a7" stroke-width="2.600"/></svg>
</header>
<aside aria-label="Marauder Bot side panel">
<div class="a" style="left:2638px;top:292px;width:1458px;height:2012px;background:#fff;border-radius:0 0 21px 21px;"></div>
<div class="a" style="left:4067px;top:292px;width:29px;height:2012px;background:#fafafa;border-left:1.500px solid #e7e7ea;border-radius:0 0 21px 0;"></div>
<div class="a" style="left:4074px;top:297px;width:16px;height:1616px;background:#c1c1c3;border-radius:8px;"></div>
<div class="a" style="left:2654px;top:368px;width:1396px;height:2px;background:#dcdfeb;"></div>
<div class="a" style="left:2750px;top:308px;width:96px;height:62px;background:#fff;border-radius:9px 9px 0 0;border:2px solid #dcdfeb;border-bottom:2px solid #fff;"></div>
<svg class="a" style="left:2685px;top:325px;" width="28" height="28" viewBox="0 0 28 28"><rect x="1.700" y="1.700" width="24.600" height="24.600" rx="2.500" fill="none" stroke="#0b0b0c" stroke-width="3.400"/><path d="M2 8.500h24M8 2v6" stroke="#0b0b0c" stroke-width="3.200" fill="none"/></svg>
<svg class="a" style="left:2782px;top:322px;" width="26" height="34" viewBox="0 0 26 34"><path d="M13 0.500v5" stroke="#0b0b0c" stroke-width="3.200" stroke-linecap="round"/><rect x="3.200" y="5.200" width="19.600" height="13.600" rx="3" fill="none" stroke="#0b0b0c" stroke-width="3.400"/><circle cx="9.300" cy="11.500" r="1.500" fill="#0b0b0c"/><circle cx="16.700" cy="11.500" r="1.500" fill="#0b0b0c"/><path d="M7.500 19v14M18.500 19v14M7.500 27.500h11M7.500 21.500L1 24.500M18.500 21.500l6.500 3" stroke="#0b0b0c" stroke-width="3.200" fill="none"/></svg>
<svg class="a" style="left:2875px;top:325px;" width="32" height="28" viewBox="0 0 32 28"><rect x="1.700" y="1.700" width="28.600" height="6.600" rx="2.500" fill="none" stroke="#0b0b0c" stroke-width="3.400"/><path d="M4.500 8.500V23a3 3 0 0 0 3 3h17a3 3 0 0 0 3-3V8.500M13 15h6" fill="none" stroke="#0b0b0c" stroke-width="3.400" stroke-linecap="round"/></svg>
<svg class="a" style="left:3886px;top:324px;" width="34" height="30" viewBox="0 0 34 30"><path d="M2 7.500h11.500L24.500 1.500v23L13.500 18.500H2zM13.500 7.500v11M7 19v6.500a1.800 1.800 0 0 0 1.800 1.800h1.900a1.800 1.800 0 0 0 1.800-1.800V19M28.500 8.200a5.800 5.800 0 0 1 0 9.600" fill="none" stroke="#0b0b0c" stroke-width="3.400" stroke-linejoin="round" stroke-linecap="round"/></svg>
<svg class="a" style="left:3987px;top:322px;" width="24" height="33" viewBox="0 0 24 33"><circle cx="12" cy="8.500" r="6.200" fill="none" stroke="#0b0b0c" stroke-width="3.400"/><path d="M2 31v-3.500a8 8 0 0 1 8-8h4a8 8 0 0 1 8 8V31" fill="none" stroke="#0b0b0c" stroke-width="3.600" stroke-linecap="round"/></svg>
<h2 class="a t" style="left:2653px;top:403.75px;font:700 44px/44px 'Liberation Sans', sans-serif;color:#000;letter-spacing:-0.873px;">Analysis</h2>
<div class="a" style="left:2654px;top:476px;width:1396px;height:69px;background:#f0f0f2;border-radius:12px;"></div>
<span class="a t" style="left:2680px;top:495.87px;font:700 28.5px/28.5px 'Liberation Sans', sans-serif;color:#8b8e94;letter-spacing:0.150px;">AI models can make mistakes. Check the results before using them.</span>
<h3 class="a t" style="left:2654px;top:576.18px;font:700 37px/37px 'Liberation Sans', sans-serif;color:#000;letter-spacing:-0.695px;">3.12. Hard Multiple Choice Questions — AP CSA Java Review - Obsolete</h3>
<div class="a" style="left:2654px;top:635px;width:1234px;height:36px;background:#f0f0f2;border-radius:8px;"></div>
<span class="a t" style="left:2665px;top:640.70px;font:400 24px/24px 'DejaVu Sans Mono', monospace;color:#111;letter-spacing:-0.009px;">https:<span style="color:#111">//runestone.academy/ns/books/published/apcsareview/VariableBasics/vHardMC.html</span></span>
<div class="a" style="left:2654px;top:688px;width:233px;height:36px;background:#e6ebf9;border-radius:9px;"></div>
<span class="a t" style="left:2673px;top:696.57px;font:700 20px/20px 'Liberation Sans', sans-serif;color:#2a5cb0;letter-spacing:0.943px;">MULTIPLE CHOICE</span>
<div class="a" style="left:2907px;top:688px;width:209px;height:36px;background:#f0f0f2;border-radius:9px;"></div>
<span class="a t" style="left:2925px;top:696.57px;font:700 20px/20px 'Liberation Sans', sans-serif;color:#8b8e94;letter-spacing:1.339px;">OPENAI GPT-4O</span>
<div class="a" style="left:3136px;top:688px;width:294px;height:36px;background:#f0f0f2;border-radius:9px;"></div>
<span class="a t" style="left:3154px;top:696.57px;font:700 20px/20px 'Liberation Sans', sans-serif;color:#8b8e94;letter-spacing:1.972px;">3/25/2025, 11:43:34 PM</span>
<div class="a" style="left:2654px;top:768px;width:1396px;height:2px;background:#dcdfeb;"></div>
<div class="a" style="left:2654px;top:814px;width:264px;height:44px;background:#fff;border-radius:8px;border:2px solid #d2d2d6;"></div>
<div class="a" style="left:2855px;top:814px;width:2px;height:44px;background:#d2d2d6;"></div>
<div class="a" style="left:2939px;top:814px;width:189px;height:44px;background:#fff;border-radius:8px;border:2px solid #d2d2d6;"></div>
<svg class="a" style="left:2667px;top:825px;" width="22" height="22" viewBox="0 0 22 22"><path d="M19.500 9.500A8.500 8.500 0 0 0 4.500 5.500L2.500 8M2.500 12.500A8.500 8.500 0 0 0 17.500 16.500L19.500 14M2.500 3v5h5M19.500 19v-5h-5" fill="none" stroke="#222" stroke-width="2" stroke-linecap="round" stroke-linejoin="round"/></svg>
<span class="a t" style="left:2710px;top:822.99px;font:700 26px/26px 'Liberation Sans', sans-serif;color:#2a2a2d;letter-spacing:-0.484px;">Re-analyze</span>
<svg class="a" style="left:2879px;top:831px;" width="18" height="10" viewBox="0 0 18 10"><path d="M1 1l8 8 8-8" fill="none" stroke="#222" stroke-width="2"/></svg>
<svg class="a" style="left:2953px;top:826px;" width="20" height="20" viewBox="0 0 20 20"><path d="M10 1.500v11M5.500 8.500l4.500 4.500 4.500-4.500M2 14v3a1.500 1.500 0 0 0 1.500 1.500h13A1.500 1.500 0 0 0 18 17v-3" fill="none" stroke="#222" stroke-width="2" stroke-linecap="round" stroke-linejoin="round"/></svg>
<span class="a t" style="left:2995px;top:822.99px;font:700 26px/26px 'Liberation Sans', sans-serif;color:#2a2a2d;letter-spacing:-1.027px;">Download</span>
<div class="a" style="left:2654px;top:879px;width:1396px;height:1004px;background:#fff;border-radius:10px;border:2px solid #dcdfeb;"></div>
<h4 class="a t" style="left:2688px;top:913.76px;font:700 31px/31px 'Liberation Sans', sans-serif;color:#000;letter-spacing:0.180px;">Question 1</h4>
<span class="a t" style="left:2877px;top:913.76px;font:400 31px/31px 'Liberation Sans', sans-serif;color:#888c93;letter-spacing:0.564px;">(choices: 2)</span>
<svg class="a" style="left:3748px;top:921.5px;" width="18" height="11" viewBox="0 0 18 11"><path d="M1 10l8-8 8 8" fill="none" stroke="#111" stroke-width="2.200"/></svg>
<svg class="a" style="left:3819px;top:917px;" width="24" height="24" viewBox="0 0 24 24"><path d="M1.500 10.500h4v12h-4zM5.500 11l5-9.500c2.200 0 3.300 1.700 2.800 3.800l-.8 4.200h7.500c1.600 0 2.600 1.400 2.200 2.900l-1.700 7.600c-.3 1.400-1.500 2.500-3 2.500h-12" fill="none" stroke="#888c93" stroke-width="1.900" stroke-linejoin="round"/></svg>
<svg class="a" style="left:3875px;top:917px;" width="24" height="24" viewBox="0 0 24 24"><g transform="rotate(180 12 12)"><path d="M1.500 10.500h4v12h-4zM5.500 11l5-9.500c2.200 0 3.300 1.700 2.800 3.800l-.8 4.200h7.500c1.600 0 2.600 1.400 2.200 2.900l-1.700 7.600c-.3 1.400-1.500 2.500-3 2.500h-12" fill="none" stroke="#888c93" stroke-width="1.900" stroke-linejoin="round" transform="translate(24 0) scale(-1 1)"/></g></svg>
<svg class="a" style="left:3931px;top:916px;" width="26" height="26" viewBox="0 0 26 26"><path d="M4.500 25V3.500a2.500 2.500 0 0 1 2.500-2.500h12a2.500 2.500 0 0 1 2.500 2.500V25M0 25h26" fill="none" stroke="#888c93" stroke-width="1.900"/><circle cx="15.500" cy="13" r="1" fill="#888c93"/></svg>
<svg class="a" style="left:3987px;top:916px;" width="26" height="26" viewBox="0 0 26 26"><path d="M4.500 25V5M8 1h11a2.500 2.500 0 0 1 2.500 2.500V15M0 25h26M1 0.500l24 24" fill="none" stroke="#888c93" stroke-width="1.900"/></svg>
<p class="a t" style="left:2688px;top:1001.94px;font:400 33.5px/33.5px 'Liberation Sans', sans-serif;color:#0c0c0d;letter-spacing:-0.261px;">Which of the following would be the correct result from the following expression: 150 (in</p>
<p class="a t" style="left:2688px;top:1051.24px;font:400 33.5px/33.5px 'Liberation Sans', sans-serif;color:#0c0c0d;letter-spacing:-0.508px;">decimal) - 21 (in octal) + 101 (in binary) - E (in hexadecimal)?</p>
<div class="a" style="left:2737px;top:1133.5px;width:34px;height:34px;background:#fff;border-radius:7px;border:2px solid #c9c9cb;"></div>
<label class="a t" style="left:2812px;top:1133.64px;font:400 33.5px/33.5px 'Liberation Sans', sans-serif;color:#888c93;letter-spacing:-0.977px;">A. 186</label>
<div class="a" style="left:2737px;top:1203px;width:34px;height:34px;background:#3fb554;border-radius:7px;"></div>
<svg class="a" style="left:2746px;top:1213px;" width="16" height="14" viewBox="0 0 16 14"><path d="M2.500 7l4 4 7-8" fill="none" stroke="#fff" stroke-width="3.600" stroke-linecap="round" stroke-linejoin="round"/></svg>
<label class="a t" style="left:2812px;top:1203.14px;font:700 33.5px/33.5px 'Liberation Sans', sans-serif;color:#000;letter-spacing:-0.617px;">B. 123</label>
<div class="a" style="left:2737px;top:1271px;width:34px;height:34px;background:#fff;border-radius:7px;border:2px solid #c9c9cb;"></div>
<label class="a t" style="left:2812px;top:1271.14px;font:400 33.5px/33.5px 'Liberation Sans', sans-serif;color:#888c93;letter-spacing:-1.284px;">C. 125</label>
<div class="a" style="left:2737px;top:1339px;width:34px;height:34px;background:#fff;border-radius:7px;border:2px solid #c9c9cb;"></div>
<label class="a t" style="left:2812px;top:1339.14px;font:400 33.5px/33.5px 'Liberation Sans', sans-serif;color:#888c93;letter-spacing:-1.284px;">D. 168</label>
<div class="a" style="left:2737px;top:1407.5px;width:34px;height:34px;background:#fff;border-radius:7px;border:2px solid #c9c9cb;"></div>
<label class="a t" style="left:2812px;top:1407.64px;font:400 33.5px/33.5px 'Liberation Sans', sans-serif;color:#888c93;letter-spacing:-1.643px;">E. 124</label>
<p class="a t" style="left:2688px;top:1489.64px;font:400 33.5px/33.5px 'Liberation Sans', sans-serif;color:#0c0c0d;letter-spacing:-0.327px;">To solve this, we first convert all numbers to decimal:</p>
<div class="a" style="left:2740px;top:1584px;width:10px;height:10px;background:#0c0c0d;border-radius:50%;"></div>
<span class="a t" style="left:2768px;top:1571.64px;font:400 33.5px/33.5px 'Liberation Sans', sans-serif;color:#0c0c0d;letter-spacing:-0.728px;">150 (decimal) remains 150.</span>
<div class="a" style="left:2740px;top:1633.5px;width:10px;height:10px;background:#0c0c0d;border-radius:50%;"></div>
<span class="a t" style="left:2768px;top:1621.14px;font:400 33.5px/33.5px 'Liberation Sans', sans-serif;color:#0c0c0d;letter-spacing:-0.479px;">21 (octal) converts to 2*8 + 1 = 17 (decimal).</span>
<div class="a" style="left:2740px;top:1683px;width:10px;height:10px;background:#0c0c0d;border-radius:50%;"></div>
<span class="a t" style="left:2768px;top:1670.64px;font:400 33.5px/33.5px 'Liberation Sans', sans-serif;color:#0c0c0d;letter-spacing:-0.548px;">101 (binary) converts to 1<span style="font-style:italic">4 + 0</span>2 + 1 = 5 (decimal).</span>
<div class="a" style="left:2740px;top:1732.5px;width:10px;height:10px;background:#0c0c0d;border-radius:50%;"></div>
<span class="a t" style="left:2768px;top:1720.14px;font:400 33.5px/33.5px 'Liberation Sans', sans-serif;color:#0c0c0d;letter-spacing:-0.516px;">E (hexadecimal) converts to 14 (decimal).</span>
<p class="a t" style="left:2688px;top:1802.64px;font:400 33.5px/33.5px 'Liberation Sans', sans-serif;color:#0c0c0d;letter-spacing:-0.431px;">Now, perform the arithmetic: 150 - 17 + 5 - 14 = 123. Thus, the correct answer is B.</p>
<div class="a" style="left:2654px;top:1917px;width:1396px;height:387px;background:#fff;border-radius:10px 10px 0 0;border:2px solid #dcdfeb;border-bottom:none;"></div>
<h4 class="a t" style="left:2688px;top:1952.76px;font:700 31px/31px 'Liberation Sans', sans-serif;color:#000;letter-spacing:0.580px;">Question 2</h4>
<span class="a t" style="left:2880px;top:1952.76px;font:400 31px/31px 'Liberation Sans', sans-serif;color:#888c93;letter-spacing:0.564px;">(choices: 2)</span>
<svg class="a" style="left:3748px;top:1959.5px;" width="18" height="11" viewBox="0 0 18 11"><path d="M1 10l8-8 8 8" fill="none" stroke="#111" stroke-width="2.200"/></svg>
<svg class="a" style="left:3819px;top:1955px;" width="24" height="24" viewBox="0 0 24 24"><path d="M1.500 10.500h4v12h-4zM5.500 11l5-9.500c2.200 0 3.300 1.700 2.800 3.800l-.8 4.200h7.500c1.600 0 2.600 1.400 2.200 2.900l-1.700 7.600c-.3 1.400-1.500 2.500-3 2.500h-12" fill="none" stroke="#888c93" stroke-width="1.900" stroke-linejoin="round"/></svg>
<svg class="a" style="left:3875px;top:1955px;" width="24" height="24" viewBox="0 0 24 24"><g transform="rotate(180 12 12)"><path d="M1.500 10.500h4v12h-4zM5.500 11l5-9.500c2.200 0 3.300 1.700 2.800 3.800l-.8 4.200h7.500c1.600 0 2.600 1.400 2.200 2.900l-1.700 7.600c-.3 1.400-1.500 2.500-3 2.500h-12" fill="none" stroke="#888c93" stroke-width="1.900" stroke-linejoin="round" transform="translate(24 0) scale(-1 1)"/></g></svg>
<svg class="a" style="left:3931px;top:1954px;" width="26" height="26" viewBox="0 0 26 26"><path d="M4.500 25V3.500a2.500 2.500 0 0 1 2.500-2.500h12a2.500 2.500 0 0 1 2.500 2.500V25M0 25h26" fill="none" stroke="#888c93" stroke-width="1.900"/><circle cx="15.500" cy="13" r="1" fill="#888c93"/></svg>
<svg class="a" style="left:3987px;top:1954px;" width="26" height="26" viewBox="0 0 26 26"><path d="M4.500 25V5M8 1h11a2.500 2.500 0 0 1 2.500 2.500V15M0 25h26M1 0.500l24 24" fill="none" stroke="#888c93" stroke-width="1.900"/></svg>
<div class="a" style="left:3335px;top:2035px;width:163px;height:47px;background:#f4f5f5;border-radius:8px;"></div>
<div class="a" style="left:3569px;top:2035px;width:63px;height:47px;background:#f4f5f5;border-radius:8px;"></div>
<div class="a" style="left:2688px;top:2085px;width:314px;height:48px;background:#f4f5f5;border-radius:8px;"></div>
<span class="a t" style="left:2688px;top:2039.64px;font:400 33.5px/33.5px 'Liberation Sans', sans-serif;color:#0c0c0d;letter-spacing:-0.336px;">Given the following code are the contents of</span>
<code class="a t" style="left:3343px;top:2043.73px;font:400 27.5px/27.5px 'DejaVu Sans Mono', monospace;color:#4a4c50;letter-spacing:-0.002px;">itemArray</code>
<span class="a t" style="left:3507px;top:2039.64px;font:400 33.5px/33.5px 'Liberation Sans', sans-serif;color:#0c0c0d;letter-spacing:-0.969px;">and</span>
<code class="a t" style="left:3576px;top:2043.73px;font:400 27.5px/27.5px 'DejaVu Sans Mono', monospace;color:#4a4c50;letter-spacing:0.109px;">val</code>
<span class="a t" style="left:3641px;top:2039.64px;font:400 33.5px/33.5px 'Liberation Sans', sans-serif;color:#0c0c0d;letter-spacing:-0.253px;">after a call of</span>
<code class="a t" style="left:2694px;top:2094.74px;font:400 27.5px/27.5px 'DejaVu Sans Mono', monospace;color:#4a4c50;letter-spacing:0.166px;">mod(itemArray,val)</code>
<span class="a t" style="left:3005px;top:2090.64px;font:400 33.5px/33.5px 'Liberation Sans', sans-serif;color:#0c0c0d;">?</span>
<div class="a" style="left:2737px;top:2173px;width:34px;height:34px;background:#fff;border-radius:7px;border:2px solid #c9c9cb;"></div>
<span class="a t" style="left:2812px;top:2173.14px;font:400 33.5px/33.5px 'Liberation Sans', sans-serif;color:#888c93;letter-spacing:-0.616px;">A. itemArray = {0, 1, 2, 3} and val = 3;</span>
<div class="a" style="left:2737px;top:2242px;width:34px;height:34px;background:#3fb554;border-radius:7px;"></div>
<svg class="a" style="left:2746px;top:2252px;" width="16" height="14" viewBox="0 0 16 14"><path d="M2.500 7l4 4 7-8" fill="none" stroke="#fff" stroke-width="3.600" stroke-linecap="round" stroke-linejoin="round"/></svg>
<span class="a t" style="left:2812px;top:2242.14px;font:700 33.5px/33.5px 'Liberation Sans', sans-serif;color:#000;letter-spacing:-0.439px;">B. itemArray = {0, 1, 2, 3} and val = 5;</span>
</aside>
<nav aria-label="macOS menu bar">
<div class="a" style="left:0px;top:0px;width:4096px;height:48px;background:#65666b;"></div>
<svg class="a" style="left:41px;top:7px;" width="27" height="31" viewBox="0 0 28 32"><path d="M21.5 17.2c0-3.4 2.8-5 2.9-5.100-1.600-2.300-4-2.600-4.900-2.700-2.100-.2-4.100 1.200-5.100 1.200-1.100 0-2.700-1.200-4.400-1.200-2.300 0-4.400 1.300-5.500 3.400-2.400 4.100-.6 10.200 1.700 13.500 1.100 1.600 2.500 3.500 4.200 3.400 1.700-.1 2.300-1.100 4.400-1.100 2 0 2.600 1.100 4.400 1 1.800 0 3-1.600 4.100-3.300 1.300-1.900 1.800-3.700 1.800-3.800-.1 0-3.600-1.400-3.600-5.300zM18.100 7.200c.9-1.100 1.600-2.700 1.400-4.200-1.300.1-3 .9-3.900 2-.9 1-1.600 2.600-1.400 4.100 1.500.1 3-.8 3.900-1.900z" fill="#c6c7ca"/></svg>
<span class="a t" style="left:108px;top:10.14px;font:700 27px/27px 'Liberation Sans', sans-serif;color:#c6c7ca;letter-spacing:-0.003px;">Chrome</span>
<span class="a t" style="left:250px;top:10.14px;font:400 27px/27px 'Liberation Sans', sans-serif;color:#c6c7ca;letter-spacing:-0.629px;">File</span>
<span class="a t" style="left:335px;top:10.14px;font:400 27px/27px 'Liberation Sans', sans-serif;color:#c6c7ca;letter-spacing:-0.633px;">Edit</span>
<span class="a t" style="left:423px;top:10.14px;font:400 27px/27px 'Liberation Sans', sans-serif;color:#c6c7ca;letter-spacing:-0.262px;">View</span>
<span class="a t" style="left:522px;top:10.14px;font:400 27px/27px 'Liberation Sans', sans-serif;color:#c6c7ca;letter-spacing:0.283px;">History</span>
<span class="a t" style="left:650px;top:10.14px;font:400 27px/27px 'Liberation Sans', sans-serif;color:#c6c7ca;letter-spacing:-0.116px;">Bookmarks</span>
<span class="a t" style="left:826px;top:10.14px;font:400 27px/27px 'Liberation Sans', sans-serif;color:#c6c7ca;letter-spacing:-0.004px;">Profiles</span>
<span class="a t" style="left:959px;top:10.14px;font:400 27px/27px 'Liberation Sans', sans-serif;color:#c6c7ca;letter-spacing:-0.849px;">Tab</span>
<span class="a t" style="left:1042px;top:10.14px;font:400 27px/27px 'Liberation Sans', sans-serif;color:#c6c7ca;letter-spacing:-0.005px;">Window</span>
<span class="a t" style="left:1180px;top:10.14px;font:400 27px/27px 'Liberation Sans', sans-serif;color:#c6c7ca;letter-spacing:-0.133px;">Help</span>
<svg class="a" style="left:2588px;top:9px;" width="31" height="31" viewBox="0 0 31 31"><circle cx="15.5" cy="15.5" r="13.5" fill="none" stroke="#b0b1b5" stroke-width="3"/><circle cx="15.5" cy="15.500" r="8.500" fill="none" stroke="#b0b1b5" stroke-width="2.500"/><rect x="14" y="10" width="3.200" height="11" rx="1.500" fill="#b0b1b5"/></svg>
<span class="a t" style="left:2653px;top:7.84px;font:400 12px/12px 'Liberation Sans', sans-serif;color:#97989c;">G</span>
<span class="a t" style="left:2653px;top:20.34px;font:400 12px/12px 'Liberation Sans', sans-serif;color:#97989c;">P</span>
<span class="a t" style="left:2653px;top:32.84px;font:400 12px/12px 'Liberation Sans', sans-serif;color:#97989c;">U</span>
<span class="a t" style="left:2698px;top:5.76px;font:400 18px/18px 'Liberation Sans', sans-serif;color:#9b9ca0;letter-spacing:-0.677px;">13%</span>
<div class="a" style="left:2667px;top:24px;width:65px;height:18px;background:#86878c;border-radius:3px;"></div>
<svg class="a" style="left:2667px;top:24px;" width="65" height="18" viewBox="0 0 65 18"><path d="M2 16 L6 12 L9 15 L13 9 L16 14 L20 12 L24 15 L29 10 L33 14 L38 12 L43 15 L48 9 L52 13 L57 8 L62 14 L62 17 L2 17Z" fill="#5b86d6"/></svg>
<span class="a t" style="left:2789px;top:4.92px;font:400 19px/19px 'Liberation Sans', sans-serif;color:#9b9ca0;letter-spacing:0.089px;">41°</span>
<span class="a t" style="left:2861px;top:4.92px;font:400 19px/19px 'Liberation Sans', sans-serif;color:#9b9ca0;letter-spacing:1.089px;">52°</span>
<span class="a t" style="left:2773px;top:23.42px;font:400 19px/19px 'Liberation Sans', sans-serif;color:#9b9ca0;letter-spacing:0.660px;">0.3W</span>
<span class="a t" style="left:2831px;top:23.42px;font:400 19px/19px 'Liberation Sans', sans-serif;color:#9b9ca0;letter-spacing:0.759px;">701Wh</span>
<svg class="a" style="left:2945px;top:8px;" width="32" height="32" viewBox="0 0 32 32"><path d="M11 1h10a2 2 0 0 1 2 2v6h6a2 2 0 0 1 2 2v10a2 2 0 0 1-2 2h-6v6a2 2 0 0 1-2 2H11a2 2 0 0 1-2-2v-6H3a2 2 0 0 1-2-2V11a2 2 0 0 1 2-2h6V3a2 2 0 0 1 2-2z" fill="#adaeb2"/><path d="M16 9v8h6" stroke="#66676c" stroke-width="3" fill="none"/></svg>
<div class="a" style="left:3016px;top:9px;width:11px;height:11px;background:#9a9b9f;border-radius:50%;"></div>
<div class="a" style="left:3017px;top:29px;width:10px;height:10px;background:#4a67b8;border-radius:50%;"></div>
<span class="a t" style="right:971px;top:5.76px;font:400 18px/18px 'Liberation Sans', sans-serif;color:#9b9ca0;">0 KB/s</span>
<span class="a t" style="right:971px;top:24.26px;font:400 18px/18px 'Liberation Sans', sans-serif;color:#9b9ca0;">1 KB/s</span>
<span class="a t" style="left:3160px;top:7.84px;font:400 12px/12px 'Liberation Sans', sans-serif;color:#97989c;">R</span>
<span class="a t" style="left:3160px;top:20.34px;font:400 12px/12px 'Liberation Sans', sans-serif;color:#97989c;">A</span>
<span class="a t" style="left:3160px;top:32.84px;font:400 12px/12px 'Liberation Sans', sans-serif;color:#97989c;">M</span>
<span class="a t" style="left:3202px;top:5.76px;font:400 18px/18px 'Liberation Sans', sans-serif;color:#9b9ca0;letter-spacing:-0.344px;">66%</span>
<div class="a" style="left:3175px;top:28px;width:62px;height:13px;background:#748c78;border-radius:2px;"></div>
<svg class="a" style="left:3273px;top:10px;" width="38" height="28" viewBox="0 0 38 28"><path d="M2 26v-9a4 4 0 0 1 4-4h26a4 4 0 0 1 4 4v9h-4v-4H6v4z" fill="#adaeb2"/><path d="M6 12V6a3 3 0 0 1 3-3h20a3 3 0 0 1 3 3v6h-4v-2a2 2 0 0 0-2-2h-4a2 2 0 0 0-2 2v2h-2v-2a2 2 0 0 0-2-2h-4a2 2 0 0 0-2 2v2z" fill="#adaeb2"/></svg>
<svg class="a" style="left:3349px;top:11px;" width="33" height="28" viewBox="0 0 33 28"><rect x="1.500" y="1.500" width="30" height="19" rx="3" fill="#8b8c90" stroke="#a9aaae" stroke-width="3"/><path d="M13 22h7v3h4v2H9v-2h4z" fill="#a9aaae"/></svg>
<span class="a t" style="left:3419px;top:7.84px;font:400 12px/12px 'Liberation Sans', sans-serif;color:#97989c;">C</span>
<span class="a t" style="left:3419px;top:20.34px;font:400 12px/12px 'Liberation Sans', sans-serif;color:#97989c;">P</span>
<span class="a t" style="left:3419px;top:32.84px;font:400 12px/12px 'Liberation Sans', sans-serif;color:#97989c;">U</span>
<span class="a t" style="left:3462px;top:5.76px;font:400 18px/18px 'Liberation Sans', sans-serif;color:#9b9ca0;letter-spacing:-0.344px;">23%</span>
<div class="a" style="left:3434px;top:24px;width:64px;height:18px;background:#86878c;border-radius:3px;"></div>
<svg class="a" style="left:3434px;top:24px;" width="64" height="18" viewBox="0 0 64 18"><path d="M2 16 L8 14 L12 15 L18 13 L24 15 L30 14 L36 15 L42 13 L48 15 L54 13 L60 14 L62 17 L2 17Z" fill="#5b86d6"/></svg>
<svg class="a" style="left:3532px;top:9px;" width="40" height="32" viewBox="0 0 40 32"><path d="M3 9h26v8c0 7-5 11-13 11S3 24 3 17z" fill="#b2b3b7"/><ellipse cx="16" cy="9" rx="13" ry="5" fill="#d6d7d9"/><path d="M29 11c6-1 9 2 8 6s-5 6-9 5" stroke="#b2b3b7" stroke-width="3" fill="none"/><path d="M2 29h28" stroke="#b2b3b7" stroke-width="3" stroke-linecap="round"/></svg>
<svg class="a" style="left:3605px;top:10px;" width="46" height="30" viewBox="0 0 46 30"><path d="M2 10h8l10-8v26l-10-8H2z" fill="#b2b3b7"/><path d="M25 9c3 3 3 9 0 12" stroke="#b2b3b7" stroke-width="3" fill="none" stroke-linecap="round"/><path d="M31 5c5 5 5 15 0 20" stroke="#9c9da1" stroke-width="3" fill="none" stroke-linecap="round"/><path d="M37 1c7 8 7 20 0 28" stroke="#86878b" stroke-width="3" fill="none" stroke-linecap="round"/></svg>
<svg class="a" style="left:3682px;top:12px;" width="40" height="24" viewBox="0 0 40 24"><circle cx="9" cy="15" r="7" fill="none" stroke="#b2b3b7" stroke-width="3"/><circle cx="31" cy="15" r="7" fill="none" stroke="#b2b3b7" stroke-width="3"/><path d="M16 14c2-2 6-2 8 0M3 12L8 2M37 12L32 2" stroke="#b2b3b7" stroke-width="3" fill="none" stroke-linecap="round"/></svg>
<div class="a" style="left:3760px;top:8px;width:45px;height:33px;background:#c4c5c8;border-radius:6px;"></div>
<span class="a t" style="left:3771px;top:10.45px;font:700 29px/29px 'Liberation Sans', sans-serif;color:#66676c;letter-spacing:0.047px;">A</span>
<svg class="a" style="left:3844px;top:9px;" width="40" height="30" viewBox="0 0 40 30"><path d="M3 11c9-9 25-9 34 0" stroke="#b2b3b7" stroke-width="4.500" fill="none" stroke-linecap="round"/><path d="M9.500 17.500c6-6 15-6 21 0" stroke="#b2b3b7" stroke-width="4.500" fill="none" stroke-linecap="round"/><path d="M20 28l-5.500-6c3-3 8-3 11 0z" fill="#b2b3b7"/></svg>
<svg class="a" style="left:3912px;top:10px;" width="28" height="29" viewBox="0 0 28 29"><rect x="1.500" y="1.500" width="25" height="11" rx="5.500" fill="none" stroke="#b2b3b7" stroke-width="2.600"/><circle cx="8" cy="7" r="3" fill="#b2b3b7"/><rect x="0" y="16" width="28" height="13" rx="6.500" fill="#b2b3b7"/><circle cx="20.500" cy="22.500" r="3.600" fill="#66676c"/></svg>
<div class="a" style="left:3948px;top:19px;width:11px;height:11px;background:#3d62c8;border-radius:50%;"></div>
<span class="a t" style="left:3987px;top:10.45px;font:400 29px/29px 'Liberation Sans', sans-serif;color:#c6c7ca;letter-spacing:-0.316px;">23:45</span>
</nav>
</body></html>
